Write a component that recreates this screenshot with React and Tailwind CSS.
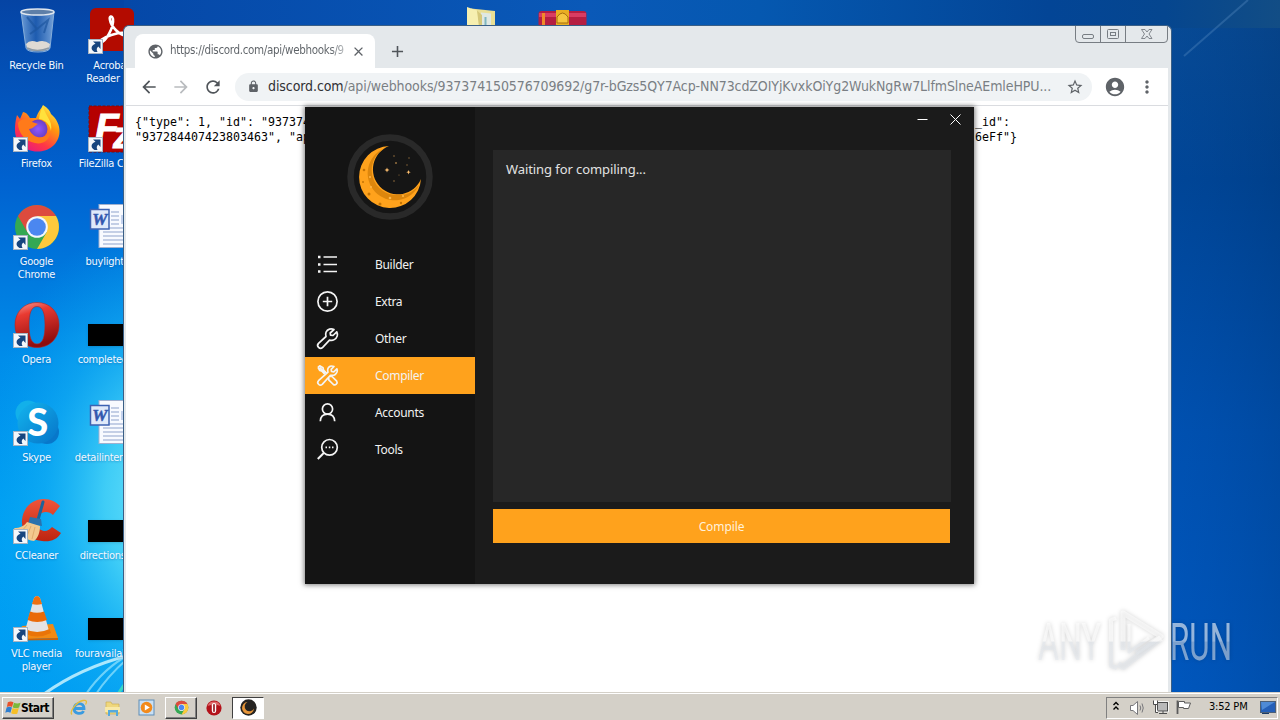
import clsx from "clsx";
import {
  MdAccountCircle,
  MdAdd,
  MdArrowBack,
  MdArrowForward,
  MdClose,
  MdLock,
  MdMoreVert,
  MdPublic,
  MdRefresh,
  MdStarBorder,
} from "react-icons/md";

/* ---------- desktop icons ---------- */

function RecycleBinIcon() {
  return (
    <svg width="48" height="48" viewBox="0 0 48 48">
      <defs>
        <linearGradient id="bin" x1="0" x2="1">
          <stop offset="0" stopColor="#8fb8e6" stopOpacity=".75" />
          <stop offset=".45" stopColor="#2f68b2" stopOpacity=".6" />
          <stop offset="1" stopColor="#9cc0e8" stopOpacity=".75" />
        </linearGradient>
      </defs>
      <path d="M8 5 L13 41 Q14 45 25 45 Q36 45 37 41 L41 5 Z" fill="url(#bin)" stroke="#86aeda" />
      <path d="M13 37 Q17 32 24 35 Q31 32 37 37 L36 42 Q32 44 24 44 Q15 44 14 41Z" fill="#dedad4" />
      <path d="M14 41 Q24 46 36 41" fill="none" stroke="#8d9aa6" strokeWidth="1.500" />
      <path d="M14 10 L24 22 L17 27 M24 22 L35 13 L31 26" fill="none" stroke="#1d569f" strokeWidth="2" opacity=".7" />
      <ellipse cx="24.500" cy="5" rx="16.500" ry="3" fill="#5e7fa8" stroke="#dfe6ee" strokeWidth="1.500" />
    </svg>
  );
}

function AcrobatIcon() {
  return (
    <svg width="48" height="48" viewBox="0 0 48 48">
      <rect x="2" y="1" width="44" height="43" rx="6" fill="#b30b00" />
      <path
        d="M12 36 C18 35 26 20 25 12 C24 8 21 9 22 13 C23 19 31 29 40 29 C43 28 41 25 36 25.500 C28 26 18 29 13 33 C10 36 11 37 12 36Z"
        fill="none"
        stroke="#fff"
        strokeWidth="2.600"
      />
    </svg>
  );
}

function FirefoxIcon() {
  return (
    <svg width="48" height="48" viewBox="0 0 48 48">
      <defs>
        <linearGradient id="ff" x1=".85" y1="0" x2=".2" y2="1">
          <stop offset="0" stopColor="#fff44f" />
          <stop offset=".35" stopColor="#ff980e" />
          <stop offset=".7" stopColor="#ff3647" />
          <stop offset="1" stopColor="#e31587" />
        </linearGradient>
        <radialGradient id="ffc">
          <stop offset="0" stopColor="#9059ff" />
          <stop offset="1" stopColor="#6a3fc4" />
        </radialGradient>
      </defs>
      <path
        d="M30 0 C35 3 37 6 38 9 C43 13 47 20 46.500 27 C46 39 36 46.500 24.500 46.500 C11 46.500 2 37 2 25 C2 18 3 14 4 10 L7 14 L10 7 C13 7 16 11 17 13 L23 13 C25 7 28 4 30 0Z"
        fill="url(#ff)"
      />
      <circle cx="25" cy="24" r="9.500" fill="url(#ffc)" />
      <path d="M5 18 C9 12 16 14 19 17 L25 19 C21 21 20 24 16 24 C20 34 31 35 37 27 C38 34 30 40 22 38 C12 36 5 28 5 18Z" fill="#ff7a1a" />
      <path d="M30 1 C32 11 40 15 38 26 C37 18 30 14 26 14 C27 8 28 5 30 1Z" fill="#ffe13c" />
    </svg>
  );
}

function FileZillaIcon() {
  return (
    <svg width="48" height="48" viewBox="0 0 48 48">
      <rect x="1" y="1" width="46" height="46" fill="#b50000" stroke="#7c0c0c" strokeDasharray="3 1.500" />
      <text
        x="7"
        y="36"
        fill="#fff"
        stroke="#fff"
        fontFamily="Liberation Sans"
        fontWeight="700"
        fontStyle="italic"
        fontSize="39"
      >
        F
        <tspan x="25" y="43" fontSize="36">
          z
        </tspan>
      </text>
    </svg>
  );
}

function ChromeIcon({ size = 48 }) {
  return (
    <svg width={size} height={size} viewBox="0 0 48 48">
      <circle cx="24" cy="24" r="22" fill="#34a853" />
      <path d="M5 13 A22 22 0 0 1 43 13 L24 13 L14.500 29.500Z" fill="#dd4b3e" />
      <path d="M43 13 A22 22 0 0 1 24 46 L33.500 29.500 L24 13Z" fill="#fdc93c" />
      <circle cx="24" cy="24" r="10.800" fill="#f4f6fb" />
      <circle cx="24" cy="24" r="8.800" fill="#4b87f0" />
    </svg>
  );
}

function OperaIcon() {
  return (
    <svg width="48" height="48" viewBox="0 0 48 48">
      <defs>
        <linearGradient id="op" x1="0" y1="0" x2=".3" y2="1">
          <stop offset="0" stopColor="#f5a29b" />
          <stop offset=".3" stopColor="#e93a31" />
          <stop offset="1" stopColor="#8f0d0d" />
        </linearGradient>
      </defs>
      <path
        fillRule="evenodd"
        fill="url(#op)"
        stroke="#b5221f"
        strokeWidth=".6"
        d="M24 1.500 C37 1.500 46 11 46 24 C46 37 37 46.500 24 46.500 C11 46.500 2 37 2 24 C2 11 11 1.500 24 1.500Z M24 5.500 C18 5.500 16 13 16 24 C16 35 18 43 24 43 C30 43 32 35 32 24 C32 13 30 5.500 24 5.500Z"
      />
    </svg>
  );
}

function OperaTask() {
  return (
    <svg width="16" height="16" viewBox="0 0 16 16">
      <circle cx="8" cy="8" r="7.600" fill="#b3121a" />
      <path d="M1.500 6 A7 7 0 0 1 14.500 6 Q8 3 1.500 6Z" fill="#df6a6a" />
      <rect x="5.800" y="3" width="4.400" height="10" rx="2.200" fill="#fff" />
      <rect x="7.200" y="4" width="1.600" height="8" rx=".8" fill="#8e0d14" />
    </svg>
  );
}

function SkypeIcon() {
  return (
    <svg width="48" height="48" viewBox="0 0 48 48">
      <defs>
        <linearGradient id="sk" x1="0" y1="0" x2="1" y2="1">
          <stop offset="0" stopColor="#13b5ee" />
          <stop offset="1" stopColor="#0673c8" />
        </linearGradient>
      </defs>
      <circle cx="15" cy="14" r="12.500" fill="#12b0ea" />
      <circle cx="34" cy="33" r="12" fill="#0877ca" />
      <circle cx="25" cy="24" r="20.500" fill="url(#sk)" />
      <text x="24.500" y="36.500" textAnchor="middle" fill="#fff" fontFamily="Lato" fontWeight="900" fontSize="38">
        S
      </text>
    </svg>
  );
}

function CCleanerIcon() {
  return (
    <svg width="48" height="48" viewBox="0 0 48 48">
      <defs>
        <linearGradient id="cc" x1="0" y1="0" x2="0" y2="1">
          <stop offset="0" stopColor="#f0553a" />
          <stop offset="1" stopColor="#bd2410" />
        </linearGradient>
      </defs>
      <path
        d="M47 9 L40 18 C36 14 29 14 25 19 C21 25 24 33 31 34 C35 34 37 32 39 30 L48 36 C44 43 37 45 29 44 C16 43 8 35 9 23 C10 11 19 2 31 2 C38 2 43 5 47 9Z"
        fill="url(#cc)"
      />
      <path d="M30 5 L25 23" stroke="#1d6399" strokeWidth="3" strokeLinecap="round" />
      <path d="M17 20 L28 22 L29 29 L15 27Z" fill="#2a72ad" />
      <path d="M14 25 L27 29 C27 35 25 41 21 44 C13 43 5 38 1 31 C7 31 11 29 14 25Z" fill="#f3c98e" />
      <path d="M18 29 L14 39 M22 30 L19 42 M14 28 L8 35" stroke="#e0ab6c" fill="none" />
    </svg>
  );
}

function VlcIcon() {
  return (
    <svg width="48" height="48" viewBox="0 0 48 48">
      <path d="M9 31 L40 29 L45 43 L4 44.500Z" fill="#f28a14" />
      <path d="M4 44 L45 43 L45 45 L5 45.500Z" fill="#c9620a" />
      <path d="M21 3 Q24 -1 27 3 L36 36 Q24 42 12 36Z" fill="#e4e2e2" />
      <path d="M21 3 Q24 -1 27 3 L29 9 Q24 10.500 19 9Z" fill="#ee7010" />
      <path d="M17 16.500 Q24 19 31 16.500 L34 25 Q24 29 14.600 25Z" fill="#ea6a08" />
      <path d="M12 34 Q24 40 36.500 34 L38 38 Q24 45 10.500 38Z" fill="#ea7408" />
    </svg>
  );
}

function WordIcon() {
  return (
    <svg width="48" height="48" viewBox="0 0 48 48">
      <rect x="11" y="1.500" width="36.500" height="43" fill="#f8faff" stroke="#9fb0cf" />
      {[9, 13, 17, 21, 25, 29, 33, 37, 41].map((y) => (
        <path key={y} d={y > 24 ? `M15 ${y} H45` : `M23 ${y} H31`} stroke="#8fa3cc" />
      ))}
      <rect x="33" y="12" width="12" height="9" fill="#c4d2ee" />
      <rect x="2.500" y="6.500" width="18.500" height="19.500" fill="#dfe9fa" stroke="#3c62b2" strokeWidth="1.500" />
      <text x="11.700" y="22" textAnchor="middle" fill="#3257ae" stroke="#3257ae" strokeWidth=".5" fontFamily="Liberation Serif" fontWeight="700" fontStyle="italic" fontSize="17">
        W
      </text>
    </svg>
  );
}

function ShortcutBadge() {
  return (
    <svg className="absolute bottom-px left-0" width="15" height="15" viewBox="0 0 15 15">
      <rect x=".5" y=".5" width="14" height="14" fill="#f4f7fb" stroke="#a8b4c2" />
      <path d="M5 2.500 H12.500 V10 L10.300 7.500 C8.500 9 8.300 10.500 9.500 13 H6.500 C2.500 11 2.500 6.500 7.500 4.800Z" fill="#17457f" />
    </svg>
  );
}

function BlackThumb() {
  return <div className="mt-[23px] h-[22px] w-12 bg-black shadow" />;
}

const COLUMN_ONE = [
  { icon: RecycleBinIcon, label: ["Recycle Bin"] },
  { icon: FirefoxIcon, label: ["Firefox"], shortcut: true },
  { icon: ChromeIcon, label: ["Google", "Chrome"], shortcut: true },
  { icon: OperaIcon, label: ["Opera"], shortcut: true },
  { icon: SkypeIcon, label: ["Skype"], shortcut: true },
  { icon: CCleanerIcon, label: ["CCleaner"], shortcut: true },
  { icon: VlcIcon, label: ["VLC media", "player"], shortcut: true },
];

const COLUMN_TWO = [
  { icon: AcrobatIcon, label: ["Acrobat", "Reader DC"], shortcut: true },
  { icon: FileZillaIcon, label: ["FileZilla Client"], shortcut: true },
  { icon: WordIcon, label: ["buylight.rtf"] },
  { icon: BlackThumb, label: ["completed.jpg"] },
  { icon: WordIcon, label: ["detailinterne.rtf"] },
  { icon: BlackThumb, label: ["directions.jpg"] },
  { icon: BlackThumb, label: ["fouravailabl.jpg"] },
];

function DesktopColumn({ items }) {
  return (
    <ul className="w-[75px] shrink-0 pt-[7px]">
      {items.map(({ icon: Icon, label, shortcut }) => (
        <li key={label[0]} className="flex h-[98px] flex-col items-center">
          <div className="relative h-12 w-12">
            <Icon />
            {shortcut && <ShortcutBadge />}
          </div>
          <div className="mt-1 text-center text-[11px] leading-[13px] whitespace-nowrap text-[#f2f8ff] [text-shadow:0_1px_2px_#00489060]">
            {label.map((line) => (
              <div key={line}>{line}</div>
            ))}
          </div>
        </li>
      ))}
    </ul>
  );
}

function Wallpaper() {
  return (
    <svg className="absolute inset-0" width="1280" height="720" viewBox="0 0 1280 720">
      <defs>
        <linearGradient id="sky" x1="0" y1="0" x2="0" y2="1">
          <stop offset="0" stopColor="#0544a4" />
          <stop offset=".25" stopColor="#0062d0" />
          <stop offset=".5" stopColor="#008dea" />
          <stop offset=".72" stopColor="#00a0f3" />
          <stop offset="1" stopColor="#009cf2" />
        </linearGradient>
        <radialGradient id="glow" gradientUnits="userSpaceOnUse" cx="175" cy="345" r="200" gradientTransform="scale(1 1.450)">
          <stop offset="0" stopColor="#7beafa" />
          <stop offset=".35" stopColor="#46d2f7" stopOpacity=".9" />
          <stop offset=".65" stopColor="#18b4f4" stopOpacity=".5" />
          <stop offset="1" stopColor="#00a0f0" stopOpacity="0" />
        </radialGradient>
        <linearGradient id="top" x1="0" x2="1">
          <stop offset="0" stopColor="#0548a8" />
          <stop offset=".4" stopColor="#0a59b8" />
          <stop offset=".55" stopColor="#0558b0" />
          <stop offset=".8" stopColor="#034596" />
          <stop offset=".9" stopColor="#05468f" />
          <stop offset="1" stopColor="#124d85" />
        </linearGradient>
        <linearGradient id="right" x1="0" y1="0" x2="0" y2="1">
          <stop offset="0" stopColor="#0a4789" />
          <stop offset=".25" stopColor="#00418c" />
          <stop offset=".6" stopColor="#004fac" />
          <stop offset="1" stopColor="#0057bd" />
        </linearGradient>
        <linearGradient id="edge" x1="0" x2="1">
          <stop offset="0" stopColor="#0058c4" stopOpacity=".2" />
          <stop offset="1" stopColor="#003c86" stopOpacity=".3" />
        </linearGradient>
      </defs>
      <rect width="1280" height="720" fill="url(#sky)" />
      <rect width="400" height="720" fill="url(#glow)" />
      <rect x="1170" width="110" height="720" fill="url(#right)" />
      <rect x="1170" y="28" width="110" height="692" fill="url(#edge)" />
      <rect x="124" width="1156" height="28" fill="url(#top)" />
      <path d="M1184 56 L1248 0" stroke="#5b8fc4" strokeWidth="2" opacity=".35" />
      <path d="M44 694 Q80 668 130 655" fill="none" stroke="#d4f7ff" strokeWidth="3" opacity=".8" />
      <path d="M86 694 Q104 668 130 654 M96 694 Q108 676 126 660" fill="none" stroke="#aeeeff" strokeWidth="2" opacity=".6" />
      <path d="M118 694 L126 682" stroke="#4ff0b0" strokeWidth="3" opacity=".7" />
    </svg>
  );
}

function FolderIcon() {
  return (
    <svg className="absolute left-[466px] top-[7px]" width="30" height="20" viewBox="0 0 30 20">
      <path d="M5 1.500 L29 4 V20 H9Z" fill="#e9df95" />
      <path d="M15 5.500 L25 6.500 V20 H15Z" fill="#dfe8e2" />
      <path d="M19.500 10 V20" stroke="#7fb6c0" strokeWidth="2" />
      <path d="M1 0 L11 3.500 L15 20 H1Z" fill="#f6efb0" />
      <path d="M11 3.500 L16 8 V20 H13Z" fill="#d5c87a" />
    </svg>
  );
}

function ArchiveIcon() {
  return (
    <svg className="absolute left-[538px] top-[10px]" width="49" height="17" viewBox="0 0 49 17">
      <rect x=".5" y="1" width="48" height="16" rx="3" fill="#b51e42" />
      <rect x="1" y="3" width="47" height="4" fill="#d93c62" />
      <rect x="4" y="3" width="3" height="12" fill="#f08a28" />
      <rect x="18" y="0" width="13" height="17" fill="#e9ae22" />
      <path d="M19 13 V7 Q24.500 -1 30 7 V13Z" fill="#f6c63f" stroke="#a66c0c" />
    </svg>
  );
}

/* ---------- browser window ---------- */

function CaptionButtons() {
  return (
    <svg className="absolute right-[2px] top-0" width="94" height="17" viewBox="0 0 94 17" fill="none" stroke="#777d83">
      <path d="M.5 0 V13 Q.5 16.500 4 16.500 H89 Q92.500 16.500 92.500 13 V0 M25.500 0 V16 M50.500 0 V16" />
      <rect x="7.500" y="8.500" width="11" height="4" rx="1.500" />
      <rect x="32.500" y="3.500" width="11" height="9" rx="1" />
      <rect x="35.500" y="6.500" width="5" height="3" />
      <path d="M66.500 3.500 H70 L72 6 L74 3.500 H77 L74 8 L77 12.500 H74 L72 10 L70 12.500 H66.500 L69.500 8Z" strokeWidth=".9" />
    </svg>
  );
}

function BrowserWindow() {
  return (
    <section className="absolute left-[123px] top-[25px] flex h-[668px] w-[1049px] flex-col overflow-hidden rounded-t-md border border-b-0 border-[#3a5f86] bg-[#e4e8eb]">
      <div className="flex h-[42px] shrink-0 items-end">
        <div className="ml-[11px] flex h-[34px] w-[240px] items-center rounded-t-lg bg-white pl-3">
          <MdPublic size={17} className="shrink-0 text-[#5f6368]" />
          <span className="ml-1.5 w-[178px] bg-linear-to-r from-[#5c6166] from-90% to-[#d5d8da] bg-clip-text text-[11.5px] tracking-[-0.32px] whitespace-nowrap text-transparent">
            https://discord.com/api/webhooks/9
          </span>
          <MdClose size={15} className="ml-[3px] shrink-0 text-[#5f6368]" />
        </div>
        <MdAdd size={19} className="mb-[7px] ml-[13px] text-[#50555a]" />
        <CaptionButtons />
      </div>

      <div className="mr-[3px] ml-0.5 flex h-[38px] shrink-0 items-center border-b border-[#dadce0] bg-white pr-[11px] pl-[13px]">
        <MdArrowBack size={20} className="text-[#50555a]" />
        <MdArrowForward size={20} className="ml-3 text-[#b9bcbf]" />
        <MdRefresh size={20} className="ml-3 text-[#50555a]" />
        <div className="ml-3 flex h-7 flex-1 items-center rounded-full bg-[#f0f3f5] pr-2 pl-3">
          <MdLock size={13} className="text-[#5f6368]" />
          <span className="ml-2 w-[790px] overflow-hidden text-[14px] tracking-[-0.09px] whitespace-nowrap text-[#7a7f84]">
            <span className="text-[#303134]">discord.com</span>
            /api/webhooks/937374150576709692/g7r-bGzs5QY7Acp-NN73cdZOIYjKvxkOiYg2WukNgRw7LlfmSlneAEmleHPU...
          </span>
          <MdStarBorder size={18} className="ml-auto text-[#5f6368]" />
        </div>
        <MdAccountCircle size={22} className="ml-3 text-[#5f6368]" />
        <MdMoreVert size={20} className="ml-[11px] text-[#5f6368]" />
      </div>

      <div className="mr-[3px] ml-0.5 flex-1 bg-white pt-[9px] pl-[9px] font-['DejaVu_Sans_Mono',monospace] text-[11.63px] leading-[15px] whitespace-pre text-black">
        <div className="flex">
          <span className="w-[840px]">{'{"type": 1, "id": "937374'}</span>
          <span>{'_id":'}</span>
        </div>
        <div className="flex">
          <span className="w-[840px]">{'"937284407423803463", "ap'}</span>
          <span>{'6eFf"}'}</span>
        </div>
      </div>
    </section>
  );
}

/* ---------- compiler app ---------- */

function Crescent() {
  return (
    <svg width="86" height="86" viewBox="0 0 86 86">
      <circle cx="43" cy="43" r="39.500" fill="#151515" stroke="#292929" strokeWidth="6.500" />
      <path d="M42 12 A31 31 0 1 0 74 45 A25 25 0 1 1 42 12Z" fill="#ffa21c" />
      <path d="M37 14.500 A27 27 0 1 0 72 51 A25 25 0 0 1 51 61 A25 25 0 0 1 37 14.500Z" fill="#dc860d" />
      <g fill="#c47405">
        <circle cx="17" cy="36" r="1.300" />
        <circle cx="16" cy="48" r="1" />
        <circle cx="22" cy="60" r="1.500" />
        <circle cx="33" cy="70" r="1.500" />
        <circle cx="54" cy="69" r="1.200" />
      </g>
      <g fill="#ffb64a">
        <circle cx="23" cy="43" r="1" />
        <circle cx="24" cy="53" r="1" />
        <circle cx="43" cy="64" r="1.300" />
        <circle cx="56" cy="62" r="1" />
      </g>
      <path d="M40 33.500 l.7 1.800 1.800.7 -1.800.7 -.7 1.800 -.7-1.800 -1.800-.7 1.800-.7Z M61.500 36 l.6 1.600 1.600.6 -1.600.6 -.6 1.600 -.6-1.600 -1.600-.6 1.600-.6Z" fill="#ffc070" />
      <g fill="#96703f">
        <circle cx="47" cy="22" r=".8" />
        <circle cx="49" cy="29" r="1" />
        <circle cx="62" cy="24" r=".7" />
        <circle cx="60" cy="31" r=".7" />
        <circle cx="47" cy="47" r=".8" />
        <circle cx="52" cy="41" r=".6" />
      </g>
    </svg>
  );
}

const MENU = [
  {
    label: "Builder",
    art: (
      <>
        <path d="M7 3.500 H20.500 M7 11 H20.500 M7 18 H20.500" />
        <path d="M1.500 3.500 H4 M1.500 11 H4 M1.500 18 H4" strokeWidth="2.600" />
      </>
    ),
  },
  {
    label: "Extra",
    art: (
      <>
        <circle cx="11" cy="11" r="9.600" />
        <path d="M11 6.300 V15.700 M6.300 11 H15.700" />
      </>
    ),
  },
  {
    label: "Other",
    art: (
      <path d="M17.500 2 C14.500 .6 11 1.500 9.600 4.500 C8.900 6.200 9.100 7.800 9.500 9 L2 15.800 C-.5 18.400 3.300 22.500 6.200 19.900 L13 12.600 C16.500 13.500 19.600 11.700 20.700 8.500 C21.100 7 20.900 5.500 20.300 4.300 L16.500 8 L14 7.700 L13.700 5.500Z" />
    ),
  },
  {
    label: "Compiler",
    active: true,
    art: (
      <>
        <path d="M17.500 2 C14.500 .8 12 2 11.300 4.500 C11 5.800 11.200 6.800 11.500 7.700 L2 16.200 C-.2 18.600 3.200 22 5.700 19.900 L14 10.800 C17 11.400 19.700 9.800 20.600 7.300 C20.900 6.200 20.800 5.300 20.400 4.400 L17.300 7.400 L15 7 L14.700 4.800Z" />
        <path d="M1.500 2.800 L3.200 1.300 L6.500 3.300 L7 5.500 L10 8.700 M1.500 2.800 L3.300 6 L5.500 6.600 L8.300 9.700 M13.500 12 L15.500 12 L20.200 16.700 C21.600 18.800 18.800 21.400 16.900 20 L12.200 15.300 V13.200" />
        <path d="M3 3 L8.500 8.500" strokeWidth="2.200" />
      </>
    ),
  },
  {
    label: "Accounts",
    art: (
      <>
        <circle cx="11" cy="7.500" r="5.100" />
        <path d="M3.800 19.800 C4 15.500 6.500 12.600 11 12.600 S18 15.500 18.200 19.800" />
      </>
    ),
  },
  {
    label: "Tools",
    art: (
      <>
        <circle cx="13" cy="8.800" r="7.800" />
        <path d="M7.500 14.300 L1.300 20.500" strokeWidth="2" />
        <path d="M9 8.800 H10.500 M12.300 8.800 H13.800 M15.500 8.800 H17" />
      </>
    ),
  },
];

function CompilerWindow() {
  return (
    <section className="absolute left-[305px] top-[107px] flex h-[477px] w-[669px] bg-[#1b1b1b] font-['Noto_Sans',sans-serif] text-[12px] text-[#f2f2f2] shadow-[0_0_5px_1px_rgba(0,0,0,0.5)]">
      <aside className="w-[170px] bg-[#141414]">
        <div className="flex justify-center pt-[27px]">
          <Crescent />
        </div>
        <nav className="mt-[26px]">
          {MENU.map(({ label, art, active }) => (
            <div key={label} className={clsx("flex h-[37px] items-center pl-[11.5px]", active && "bg-[#ffa21c]")}>
              <svg width="22" height="22" viewBox="0.500 0.500 22 22" fill="none" stroke="#f4f4f4" strokeWidth="1.700" strokeLinejoin="round" overflow="visible">
                {art}
              </svg>
              <span className="ml-[36.5px] pt-px tracking-[-0.3px]">{label}</span>
            </div>
          ))}
        </nav>
      </aside>

      <main className="flex flex-1 flex-col pr-[23px] pl-[18px]">
        <div className="-mr-[10px] flex h-[43px] items-start justify-end gap-[22px] pt-[7px]">
          <svg width="11" height="11" viewBox="0 0 11 11" stroke="#fff">
            <path d="M.5 5.500 H10.500" />
          </svg>
          <svg width="11" height="11" viewBox="0 0 11 11" stroke="#fff">
            <path d="M.5 .5 L10.500 10.500 M10.500 .5 L.5 10.500" />
          </svg>
        </div>
        <div className="h-[352px] bg-[#272727] pt-[9px] pl-[13px] text-[13px] leading-5 tracking-[-0.08px] text-[#e2e2e2]">
          Waiting for compiling...
        </div>
        <button className="mt-[7px] mr-px h-[34px] bg-[#ffa21c] pt-0.5 text-center tracking-[-0.1px] text-[#fff1db]">
          Compile
        </button>
      </main>
    </section>
  );
}

/* ---------- watermark and taskbar ---------- */

function Watermark() {
  return (
    <svg className="absolute left-[1030px] top-[600px] overflow-visible" width="220" height="80" viewBox="0 0 220 80">
      <defs>
        <linearGradient id="mark" gradientUnits="userSpaceOnUse" x1="0" y1="10" x2="0" y2="72">
          <stop offset="0" stopColor="#fff" stopOpacity=".6" />
          <stop offset=".5" stopColor="#fff" stopOpacity=".58" />
          <stop offset=".52" stopColor="#e0e5eb" stopOpacity=".55" />
          <stop offset="1" stopColor="#e4e8ed" stopOpacity=".55" />
        </linearGradient>
      </defs>
      <g fill="url(#mark)" style={{ filter: "drop-shadow(0 0 2px rgba(0,0,0,.28))" }}>
        <text x="8" y="60" fontFamily="Roboto" fontSize="52" textLength="63" lengthAdjust="spacingAndGlyphs">
          ANY
        </text>
        <text x="140" y="60" fontFamily="Roboto" fontSize="52" textLength="62" lengthAdjust="spacingAndGlyphs">
          RUN
        </text>
        <g fill="none" stroke="url(#mark)" strokeLinejoin="round">
          <path d="M93 50 V13 L131 36.500 L106 53" strokeWidth="5" />
          <path d="M131 38 L93 67 L88 64" strokeWidth="6" />
          <path d="M86 18 L81 20 V66 L87 68" strokeWidth="4" />
          <path d="M99 24 V52 L119 38" strokeWidth="3" />
        </g>
      </g>
    </svg>
  );
}

function StartFlag() {
  return (
    <svg className="shrink-0" width="16" height="16" viewBox="0 0 17 16">
      <path d="M3 2 Q6 0 9 2 L7.500 7 Q5 5.500 2 7Z" fill="#e8512a" />
      <path d="M9.500 2.500 Q13 4 16.500 2.500 L15 7.500 Q12 9 8.200 7.500Z" fill="#7cb83a" />
      <path d="M1.700 7.500 Q4.500 6 7.400 7.500 L5.800 13 Q3 11.500 .3 13Z" fill="#2f7fd0" />
      <path d="M8 8 Q11 9.500 14.700 8 L13 14 Q10 15 6.500 13.500Z" fill="#f6bf26" />
    </svg>
  );
}

function ExplorerE() {
  return (
    <svg width="18" height="18" viewBox="0 0 18 18" fill="none">
      <path d="M4 9.500 H14 C14 3 5 3 4 9.500 C4 15.500 12 15.500 13.500 12" stroke="#3a9be0" strokeWidth="2.800" />
      <path d="M2 15.500 C-1 13 6 3 13 1.500 C17 .7 17 3 15.500 5.500" stroke="#e5bd3a" strokeWidth="1.300" />
    </svg>
  );
}

function LibrariesIcon() {
  return (
    <svg width="18" height="18" viewBox="0 0 18 18">
      <path d="M2 3 H7 L8 5 H15 V15 H2Z" fill="#efd77c" stroke="#c6a94b" strokeWidth=".6" />
      <path d="M1 8 H16 V13 H1Z" fill="#f8e9a8" />
      <path d="M4 17 V11 H14 V17 H12 V13.500 H6 V17Z" fill="#55a9dc" />
    </svg>
  );
}

function MediaIcon() {
  return (
    <svg width="17" height="17" viewBox="0 0 17 17">
      <rect x="1" y="1" width="15" height="15" fill="#c9e0f4" stroke="#5f8db6" />
      <circle cx="8.500" cy="8.500" r="5.800" fill="#f28a1b" />
      <path d="M6.800 5.500 L11.800 8.500 L6.800 11.500Z" fill="#fff" />
    </svg>
  );
}

function MoonTask() {
  return (
    <svg width="17" height="17" viewBox="0 0 17 17">
      <circle cx="8.500" cy="8.500" r="8.200" fill="#262422" />
      <path d="M7.500 3 A6 6 0 1 0 14 9.500 A4.900 4.900 0 1 1 7.500 3Z" fill="#e8963a" />
    </svg>
  );
}

const RAISED = "border border-t-white border-l-white border-r-[#404040] border-b-[#404040] shadow-[inset_-1px_-1px_0_#808080]";

function Taskbar() {
  return (
    <footer className="absolute inset-x-0 bottom-0 flex h-[28px] items-center border-t border-[#d4d0c8] bg-[#d4d0c8] pl-0.5 shadow-[inset_0_1px_0_#fff]">
      <button className={clsx("mt-0.5 flex h-[22px] w-[52px] items-center pl-0.5", RAISED)}>
        <StartFlag />
        <span className="text-[12px] font-bold tracking-[-0.6px] text-black">Start</span>
      </button>
      <div className="mt-0.5 flex h-[22px] items-center">
        <div className="ml-4 flex w-[18px]"><ExplorerE /></div>
        <div className="ml-4 flex w-[18px]"><LibrariesIcon /></div>
        <div className="ml-4 flex w-[17px]"><MediaIcon /></div>
        <div className={clsx("ml-[10px] flex h-[22px] w-8 items-center justify-center", RAISED)}>
          <ChromeIcon size={15} />
        </div>
        <div className="ml-[9px] flex"><OperaTask /></div>
        <div className="ml-[10px] flex h-[22px] w-8 items-center justify-center border border-t-[#404040] border-l-[#404040] border-r-white border-b-white bg-white">
          <MoonTask />
        </div>
      </div>

      <div className="mt-0.5 mr-[2px] ml-auto flex h-[22px] w-[172px] items-center border border-t-[#808080] border-l-[#808080] border-r-white border-b-white pl-[5px]">
        <svg className="-mt-[3px]" width="8" height="10" viewBox="0 0 8 10" fill="none" stroke="#000" strokeWidth="1.400">
          <path d="M1.500 4 L4 1.500 L6.500 4 M1.500 8.500 L4 6 L6.500 8.500" />
        </svg>
        <svg className="ml-[9px]" width="18" height="16" viewBox="0 0 18 16" fill="none" stroke="#77777b">
          <path d="M1.500 5.500 H4 L8.500 1.500 V14.500 L4 10.500 H1.500Z" fill="#fff" />
          <path d="M11 5.500 Q12.500 8 11 10.500 M13 3.500 Q15.500 8 13 12.500" />
        </svg>
        <svg className="-mt-0.5 ml-[5px]" width="17" height="16" viewBox="0 0 17 16" fill="none" stroke="#4c4c4c">
          <rect x="5.500" y="3.500" width="10" height="8.500" fill="#b9b9b9" stroke="#fff" strokeWidth="2.500" />
          <rect x="5.500" y="3.500" width="10" height="8.500" fill="#b9b9b9" />
          <path d="M7 14.500 H15 M11 12 V14" />
          <path d="M1.500 1.500 V5.500 H5.500 V1.500 M3.500 5.500 V13.500 H6" fill="#fff" />
        </svg>
        <svg className="-mt-0.5 ml-[6px]" width="17" height="16" viewBox="0 0 17 16" stroke="#5c5c5c">
          <path d="M2.500 1.500 V15" strokeWidth="1.800" />
          <path d="M3.500 2.500 H9.500 V4 H15.500 L13.500 9.500 H8.500 V8.500 H3.500Z" fill="#fff" />
        </svg>
        <span className="ml-[17px] w-10 text-[11px] tracking-[-0.2px] whitespace-nowrap text-black">3:52 PM</span>
        <svg className="mr-px ml-auto" width="16" height="14" viewBox="0 0 16 14">
          <rect x=".5" y=".5" width="15" height="11" fill="#2560b8" stroke="#4c6078" />
          <path d="M1 1 H15 L2 9Z" fill="#4f8bd6" />
          <path d="M2 12.500 H9" stroke="#183b68" />
        </svg>
      </div>
    </footer>
  );
}

export default function App() {
  return (
    <div className="relative h-[720px] w-[1280px] overflow-hidden bg-[#0060c8] font-['DejaVu_Sans_Condensed','DejaVu_Sans',sans-serif]">
      <Wallpaper />
      <div className="absolute top-0 -left-px flex w-[160px] overflow-hidden text-[11px] tracking-[-0.25px]">
        <DesktopColumn items={COLUMN_ONE} />
        <DesktopColumn items={COLUMN_TWO} />
      </div>
      <FolderIcon />
      <ArchiveIcon />
      <BrowserWindow />
      <CompilerWindow />
      <Watermark />
      <Taskbar />
    </div>
  );
}
